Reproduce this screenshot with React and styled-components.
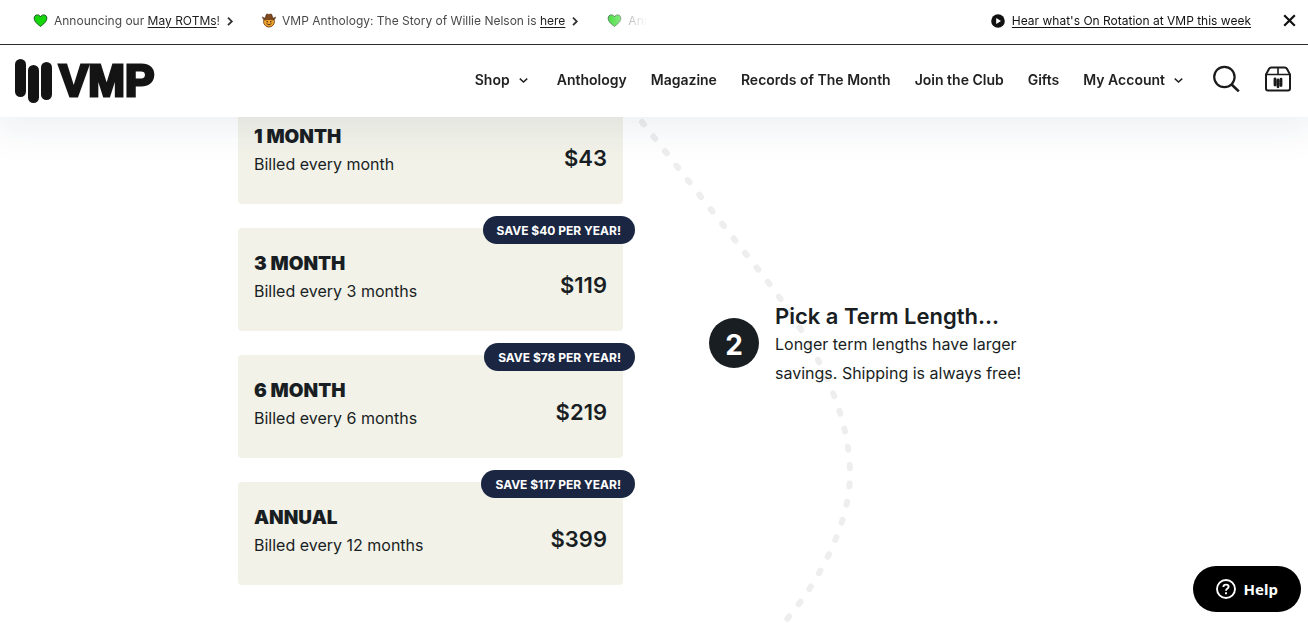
import React from 'react'
import styled, { createGlobalStyle } from 'styled-components'

const GlobalStyle = createGlobalStyle`

* {
    box-sizing: border-box;
}

body {
    margin: 0;
    background: #fff;
    color: #191e23;
    font-family: Inter, "Liberation Sans", sans-serif;
    overflow-x: hidden;
}

button {
    font-family: inherit;
    color: inherit;
    background: none;
    border: 0;
    padding: 0;
    cursor: pointer;
}

a {
    color: inherit;
}

svg {
    display: block;
    flex: none;
}

`

const Header = styled.header`
    position: sticky;
    top: 0;
    z-index: 2;
    background: #fff;
    box-shadow: 0 4px 36px 8px rgba(30, 50, 90, 0.08);
`

const Announcement = styled.div`
    display: flex;
    align-items: center;
    justify-content: space-between;
    height: 45px;
    padding-bottom: 3px;
    padding-right: 12px;
    border-bottom: 1px solid #2b2b2b;
`

const Ticker = styled.div`
    flex: 0 0 50%;
    display: flex;
    gap: 28px;
    padding-left: 33px;
    overflow: hidden;
    white-space: nowrap;
    mask-image: linear-gradient(to right, #000 92%, transparent 100%);
`

const TickerItem = styled.div`
    flex: none;
    display: flex;
    align-items: center;
    gap: 6px;
    font-size: 12px;
    line-height: 20px;
    color: #4a4a4a;

    a {
        color: #1d1d1d;
        text-underline-offset: 2px;
    }
`

const AnnouncementSide = styled.div`
    display: flex;
    align-items: center;
    gap: 32px;
`

const RotationLink = styled.a`
    display: flex;
    align-items: center;
    gap: 7px;
    font-size: 12px;
    line-height: 20px;
    color: #111;
    text-underline-offset: 2px;
`

const NavBar = styled.div`
    display: flex;
    align-items: center;
    justify-content: space-between;
    height: 72px;
    padding: 0 16px 0 15px;
`

const Logo = styled.a`
    display: flex;
    align-items: center;
    gap: 6px;
    color: #141414;
    text-decoration: none;
`

const Wordmark = styled.span`
    font-family: "Liberation Sans", Arial, sans-serif;
    font-size: 44px;
    font-weight: 700;
    line-height: 44px;
    -webkit-text-stroke: 3px #141414;
`

const Nav = styled.nav`
    display: flex;
    align-items: center;
    gap: 24px;
    padding-bottom: 2px;
    font-size: 14px;
    font-weight: 600;
    line-height: 20px;
    white-space: nowrap;
    color: #222;

    a {
        text-decoration: none;
    }
`

const MenuButton = styled.button`
    display: flex;
    align-items: center;
    gap: 8px;
    padding-right: 4px;
    font-size: 14px;
    font-weight: 600;
    line-height: 20px;
`

const Tools = styled.div`
    display: flex;
    align-items: center;
    gap: 24px;
    padding-bottom: 2px;
`

/* the first plan slides in under the sticky header */
const Main = styled.main`
    position: relative;
    display: flex;
    align-items: center;
    gap: 86px;
    max-width: 832px;
    margin: -16px auto 0;
    padding-bottom: 37px;
`

const Trail = styled.svg`
    position: absolute;
    top: 0;
    left: 392px;
    z-index: -1;
    width: 240px;
    height: 522px;
`

const Plans = styled.ul`
    flex: 0 0 385px;
    display: flex;
    flex-direction: column;
    gap: 24px;
    margin: 0;
    padding: 0;
    list-style: none;
`

const Plan = styled.button`
    position: relative;
    display: flex;
    align-items: center;
    justify-content: space-between;
    width: 100%;
    height: 103px;
    padding: 10px 16px 0;
    border-radius: 4px;
    background: #f2f2e9;
    text-align: left;
`

const PlanInfo = styled.span`
    display: flex;
    flex-direction: column;
    padding-bottom: 14px;
`

const PlanName = styled.span`
    font-size: 19px;
    font-weight: 900;
    line-height: 26px;
`

const PlanTerm = styled.span`
    font-size: 16px;
    line-height: 28px;
`

const Price = styled.span`
    font-size: 22px;
    font-weight: 600;
    line-height: 28px;
`

const Badge = styled.span`
    position: absolute;
    top: -12px;
    right: -12px;
    height: 28px;
    padding: 0 14px;
    border-radius: 14px;
    background: #1a2642;
    color: #fff;
    font-size: 12px;
    font-weight: 700;
    line-height: 29px;
`

const Step = styled.section`
    flex: 1;
    display: flex;
    align-items: center;
    gap: 16px;
`

const StepNumber = styled.span`
    flex: none;
    width: 50px;
    height: 50px;
    border-radius: 50%;
    background: #191e23;
    color: #fff;
    font-size: 28px;
    font-weight: 700;
    line-height: 54px;
    text-align: center;
`

const StepText = styled.div`
    max-width: 260px;
    padding-top: 4px;

    h2 {
        margin: 0;
        font-size: 22px;
        font-weight: 600;
        line-height: 28px;
        white-space: nowrap;
    }

    p {
        margin: 0;
        font-size: 16px;
        line-height: 29px;
    }
`

const HelpButton = styled.button`
    position: fixed;
    right: 7px;
    bottom: 11px;
    z-index: 3;
    display: flex;
    align-items: center;
    gap: 8px;
    height: 46px;
    padding: 0 23px;
    border-radius: 23px;
    background: #000;
    color: #fff;
    font-family: "Noto Sans", sans-serif;
    font-size: 15px;
    font-weight: 700;
`

const Heart = () => (
    <svg width='15' height='15' viewBox='0 0 15 15'>
        <path d='M7.5 13.4 C4.6 11.2 1.2 8.6 1.2 5.2 C1.2 3.1 2.6 1.9 4.3 1.9 C5.8 1.9 6.9 2.7 7.5 4 C8.1 2.7 9.2 1.9 10.7 1.9 C12.4 1.9 13.8 3.1 13.8 5.2 C13.8 8.6 10.4 11.2 7.5 13.4Z' fill='#16d60c' stroke='#14501a' />
    </svg>
)

const Cowboy = () => (
    <svg width='14' height='15' viewBox='0 0 14 15'>
        <circle cx='7' cy='8.6' r='5.4' fill='#f0a52e' stroke='#7a4a1c' />
        <path d='M0.6 3.8 C1.5 5.4 3 5.2 3.4 4.4 L4.2 1.6 C5 .6 6.2 1.4 7 1.4 C7.8 1.4 9 .6 9.8 1.6 L10.6 4.4 C11 5.2 12.5 5.4 13.4 3.8 C13.6 6.4 11.6 7.2 10 6.8 C8 6.3 6 6.3 4 6.8 C2.4 7.2 .4 6.4 .6 3.8Z' fill='#80491f' stroke='#4a2a12' strokeWidth='.6' />
        <circle cx='5.2' cy='8.8' r='.8' fill='#4a2a12' />
        <circle cx='8.8' cy='8.8' r='.8' fill='#4a2a12' />
        <path d='M4.6 10.6 Q7 13 9.4 10.6' fill='none' stroke='#4a2a12' strokeWidth='.9' />
    </svg>
)

const ChevronRight = () => (
    <svg width='8' height='10' viewBox='0 0 8 10' fill='none' stroke='#333' strokeWidth='1.8'>
        <path d='M2 1.6 L5.8 5.4 L2 9.2' />
    </svg>
)

const ChevronDown = () => (
    <svg width='11' height='8' viewBox='0 0 11 8' fill='none' stroke='#222' strokeWidth='1.5'>
        <path d='M1.8 2.6 L5.5 6 L9.2 2.6' />
    </svg>
)

const LogoMark = () => (
    <svg width='38' height='44' viewBox='0 0 38 44' fill='#141414'>
        <rect x='0' y='0' width='11' height='38' rx='5.5' />
        <rect x='13' y='6' width='11' height='38' rx='5.5' />
        <rect x='26' y='3' width='11' height='38' rx='5.5' />
    </svg>
)

const plans = [
    { name: '1 MONTH', term: 'Billed every month', price: '$43' },
    { name: '3 MONTH', term: 'Billed every 3 months', price: '$119', save: 'SAVE $40 PER YEAR!' },
    { name: '6 MONTH', term: 'Billed every 6 months', price: '$219', save: 'SAVE $78 PER YEAR!' },
    { name: 'ANNUAL', term: 'Billed every 12 months', price: '$399', save: 'SAVE $117 PER YEAR!' },
]

const RotmItem = () => (
    <TickerItem>
        <Heart />
        <span>Announcing our <a href='#rotm'>May ROTMs</a>!</span>
        <ChevronRight />
    </TickerItem>
)

const App = () => {
    return (
        <>
        <GlobalStyle />
        <Header>
            <Announcement>
                <Ticker>
                    <RotmItem />
                    <TickerItem>
                        <Cowboy />
                        <span>VMP Anthology: The Story of Willie Nelson is <a href='#willie'>here</a></span>
                        <ChevronRight />
                    </TickerItem>
                    <RotmItem />
                </Ticker>
                <AnnouncementSide>
                    <RotationLink href='#rotation'>
                        <svg width='14' height='14' viewBox='0 0 14 14'>
                            <circle cx='7' cy='7' r='6.8' fill='#111' />
                            <path d='M5.2 4 L10 7 L5.2 10Z' fill='#fff' />
                        </svg>
                        Hear what's On Rotation at VMP this week
                    </RotationLink>
                    <button aria-label='Close'>
                        <svg width='13' height='13' viewBox='0 0 13 13' stroke='#111' strokeWidth='2.2'>
                            <path d='M1.2 1.2 L11.8 11.8 M11.8 1.2 L1.2 11.8' />
                        </svg>
                    </button>
                </AnnouncementSide>
            </Announcement>
            <NavBar>
                <Logo href='#home'>
                    <LogoMark />
                    <Wordmark>VMP</Wordmark>
                </Logo>
                <Nav>
                    <MenuButton>Shop <ChevronDown /></MenuButton>
                    <a href='#anthology'>Anthology</a>
                    <a href='#magazine'>Magazine</a>
                    <a href='#records'>Records of The Month</a>
                    <a href='#join'>Join the Club</a>
                    <a href='#gifts'>Gifts</a>
                    <MenuButton>My Account <ChevronDown /></MenuButton>
                    <Tools>
                        <button aria-label='Search'>
                            <svg width='28' height='28' viewBox='0 0 28 28' fill='none' stroke='#1a1a1a' strokeWidth='2.2'>
                                <circle cx='12.4' cy='12' r='10.2' />
                                <path d='M19.4 19.2 L26.8 26.4' strokeWidth='2.6' />
                            </svg>
                        </button>
                        <button aria-label='Cart'>
                            <svg width='28' height='26' viewBox='0 0 28 26' fill='none' stroke='#1a1a1a' strokeWidth='2' strokeLinejoin='round'>
                                <path d='M2 8.5 L5.2 2.6 Q5.8 1.4 7.2 1.4 H20.8 Q22.2 1.4 22.8 2.6 L26 8.5 V22.6 Q26 24.6 24 24.6 H4 Q2 24.6 2 22.6Z' />
                                <path d='M2 8.5 H26 M14 1.4 V8.5' strokeWidth='1.6' />
                                <path d='M11 12.8 V19 M14 14 V20.8 M17 13.2 V19.6' strokeWidth='2.8' strokeLinecap='round' />
                            </svg>
                        </button>
                    </Tools>
                </Nav>
            </NavBar>
        </Header>
        <Main>
            <Trail viewBox='0 0 240 522' fill='none' stroke='#eeeeee' strokeWidth='6' strokeLinecap='round' strokeDasharray='3 15.5' aria-hidden='true'>
                <path d='M12 21 L127 167 C172 223 220 300 220 373 C220 420 192 478 152 524' />
            </Trail>
            <Plans>
                {plans.map(plan => (
                    <li key={plan.name}>
                        <Plan>
                            <PlanInfo>
                                <PlanName>{plan.name}</PlanName>
                                <PlanTerm>{plan.term}</PlanTerm>
                            </PlanInfo>
                            <Price>{plan.price}</Price>
                            {plan.save && <Badge>{plan.save}</Badge>}
                        </Plan>
                    </li>
                ))}
            </Plans>
            <Step>
                <StepNumber>2</StepNumber>
                <StepText>
                    <h2>Pick a Term Length...</h2>
                    <p>Longer term lengths have larger savings. Shipping is always free!</p>
                </StepText>
            </Step>
        </Main>
        <HelpButton>
            <svg width='20' height='20' viewBox='0 0 20 20' fill='none' stroke='#fff' strokeWidth='1.9'>
                <circle cx='10' cy='10' r='9' />
                <path d='M7.4 8 Q7.4 5.6 10 5.6 Q12.6 5.6 12.6 7.8 Q12.6 9 11.2 9.8 Q10 10.6 10 11.8' />
                <path d='M10 13.2 V15.2' />
            </svg>
            Help
        </HelpButton>
        </>
    )
}

export default App
